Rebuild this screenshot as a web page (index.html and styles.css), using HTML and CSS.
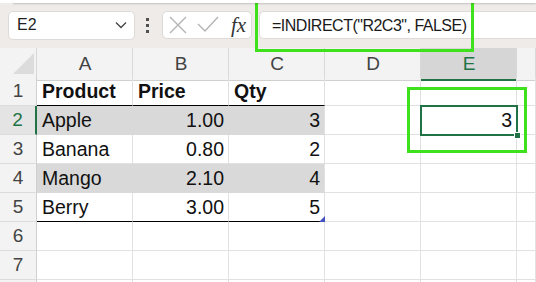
FILE: index.html
```html
<!DOCTYPE html>
<html lang="en">
<head>
    <meta charset="UTF-8">
    <title>Sheet</title>
    <link rel="stylesheet" href="styles.css">
</head>
<body>
    <div class="ribbon-edge"></div>
    <div class="toolbar">
        <div class="namebox">
            <span>E2</span>
            <svg class="chevron" width="12" height="8" viewBox="0 0 12 8"><path d="M1 1.5 L6 6.5 L11 1.5" fill="none" stroke="#444" stroke-width="1.3"/></svg>
        </div>
        <div class="dots"><i></i><i></i><i></i></div>
        <div class="fxbox">
            <svg width="18" height="18" viewBox="0 0 18 18"><path d="M1 1 L17 17 M17 1 L1 17" stroke="#b4b4b4" stroke-width="1.4"/></svg>
            <svg width="22" height="18" viewBox="0 0 22 18"><path d="M1 8 L8 15 L21 1" fill="none" stroke="#b4b4b4" stroke-width="1.4"/></svg>
            <span class="fx">fx</span>
        </div>
        <div class="formula">=INDIRECT("R2C3", FALSE)</div>
    </div>

    <div class="sheet">
        <div class="row head">
            <div class="cell corner"><span class="tri"></span></div>
            <div class="cell colh">A</div>
            <div class="cell colh">B</div>
            <div class="cell colh">C</div>
            <div class="cell colh">D</div>
            <div class="cell colh active">E</div>
            <div class="cell colh"></div>
        </div>
        <div class="row">
            <div class="cell rowh">1</div>
            <div class="cell bold top-line">Product</div>
            <div class="cell bold top-line">Price</div>
            <div class="cell bold top-line">Qty</div>
            <div class="cell"></div>
            <div class="cell"></div>
            <div class="cell"></div>
        </div>
        <div class="row">
            <div class="cell rowh active">2</div>
            <div class="cell fill">Apple</div>
            <div class="cell fill num">1.00</div>
            <div class="cell fill num">3</div>
            <div class="cell"></div>
            <div class="cell num">3</div>
            <div class="cell"></div>
        </div>
        <div class="row">
            <div class="cell rowh">3</div>
            <div class="cell">Banana</div>
            <div class="cell num">0.80</div>
            <div class="cell num">2</div>
            <div class="cell"></div>
            <div class="cell"></div>
            <div class="cell"></div>
        </div>
        <div class="row">
            <div class="cell rowh">4</div>
            <div class="cell fill">Mango</div>
            <div class="cell fill num">2.10</div>
            <div class="cell fill num">4</div>
            <div class="cell"></div>
            <div class="cell"></div>
            <div class="cell"></div>
        </div>
        <div class="row">
            <div class="cell rowh">5</div>
            <div class="cell bottom-line">Berry</div>
            <div class="cell bottom-line num">3.00</div>
            <div class="cell bottom-line num">5<span class="resize"></span></div>
            <div class="cell"></div>
            <div class="cell"></div>
            <div class="cell"></div>
        </div>
        <div class="row">
            <div class="cell rowh">6</div>
            <div class="cell"></div><div class="cell"></div><div class="cell"></div>
            <div class="cell"></div><div class="cell"></div><div class="cell"></div>
        </div>
        <div class="row">
            <div class="cell rowh">7</div>
            <div class="cell"></div><div class="cell"></div><div class="cell"></div>
            <div class="cell"></div><div class="cell"></div><div class="cell"></div>
        </div>
        <div class="row">
            <div class="cell rowh"></div>
            <div class="cell"></div><div class="cell"></div><div class="cell"></div>
            <div class="cell"></div><div class="cell"></div><div class="cell"></div>
        </div>

        <!-- selected cell E2 -->
        <div class="selection"><span class="handle"></span></div>
        <div class="mark mark-cell"></div>
    </div>

    <div class="mark mark-formula"></div>
</body>
</html>
```

FILE: styles.css
```css
* {
    box-sizing: border-box;
}
body {
    margin: 0;
    width: 536px;
    height: 282px;
    overflow: hidden;
    background: #ffffff;
    font-family: "Liberation Sans", Arial, sans-serif;
    position: relative;
}
.ribbon-edge {
    height: 3px;
    margin-left: 13px;
    background: #ffffff;
    box-shadow: 0 1px 2px rgba(0, 0, 0, 0.18);
    position: relative;
    z-index: 1;
}
.toolbar {
    height: 45px;
    background: #efebe8;
    display: flex;
    align-items: center;
    padding-left: 8px;
    padding-bottom: 1px;
}
.namebox {
    width: 127px;
    height: 29px;
    background: #ffffff;
    border: 1px solid #dedad7;
    border-radius: 5px;
    display: flex;
    align-items: center;
    justify-content: space-between;
    padding: 0 7px 0 8px;
    font-size: 16px;
    color: #1f1f1f;
}
.dots {
    width: 4px;
    margin: 0 12px 0 11px;
    display: flex;
    flex-direction: column;
    gap: 3px;
}
.dots i {
    width: 3px;
    height: 3px;
    background: #505050;
}
.fxbox {
    width: 90px;
    height: 28px;
    background: #ffffff;
    border: 1px solid #dedad7;
    border-radius: 5px;
    display: flex;
    align-items: center;
    padding-left: 6px;
    gap: 10px;
}
.fx {
    font-family: "Liberation Serif", "Times New Roman", serif;
    font-style: italic;
    font-size: 21px;
    color: #333333;
    margin-left: 2px;
}
.formula {
    flex: 1;
    margin-left: 7px;
    height: 28px;
    background: #ffffff;
    border: 1px solid #dedad7;
    border-right: none;
    border-radius: 5px 0 0 5px;
    padding-left: 12px;
    font-size: 16px;
    letter-spacing: -0.5px;
    line-height: 27px;
    color: #1a1a1a;
}

/* grid */
.sheet {
    position: relative;
}
.row {
    display: grid;
    grid-template-columns: 37px repeat(5, 96px) 1fr;
    height: 29px;
}
.cell {
    border-right: 1px solid #e1e1e1;
    border-bottom: 1px solid #e1e1e1;
    font-size: 19.5px;
    line-height: 28px;
    padding: 0 4px 0 5px;
    color: #111111;
    white-space: nowrap;
    position: relative;
}
.head .cell {
    background: #f3f3f3;
    border-right-color: #d8d8d8;
    border-bottom-color: #d0d0d0;
}
.colh {
    text-align: center;
    font-size: 19px;
    color: #444444;
    line-height: 31px;
}
.colh.active {
    background: #d6d6d6 !important;
    color: #217346;
    border-bottom: 2px solid #217346 !important;
}
.corner .tri {
    position: absolute;
    left: 13px;
    top: 5px;
    width: 0;
    height: 0;
    border-left: 21px solid transparent;
    border-bottom: 21px solid #dcdcdc;
}
.rowh {
    background: #f3f3f3;
    border-right-color: #d0d0d0;
    border-bottom-color: #dcdcdc;
    text-align: center;
    color: #444444;
    padding: 0;
    font-size: 19px;
}
.rowh.active {
    background: #e4e4e4;
    color: #217346;
    border-right: 2px solid #217346;
}
.bold {
    font-weight: bold;
}
.num {
    text-align: right;
}
.fill {
    background: #d9d9d9;
    border-right-color: #d9d9d9;
    border-bottom-color: #d9d9d9;
}
.fill:nth-child(4) {
    border-right-color: #e1e1e1;
}
.top-line {
    border-bottom: 1px solid #000000;
}
.bottom-line {
    border-bottom: 1px solid #000000;
}
.resize {
    position: absolute;
    right: -1px;
    bottom: -1px;
    width: 0;
    height: 0;
    border-left: 6px solid transparent;
    border-bottom: 6px solid #4452c0;
}
.selection {
    position: absolute;
    left: 420px;
    top: 57px;
    width: 98px;
    height: 31px;
    border: 2px solid #217346;
}
.handle {
    position: absolute;
    right: -5px;
    bottom: -5px;
    width: 7px;
    height: 7px;
    background: #217346;
    border: 1px solid #ffffff;
}
.mark {
    position: absolute;
    border: 3px solid #3ee11c;
}
.mark-formula {
    left: 255px;
    top: -2px;
    width: 219px;
    height: 54px;
}
.mark-cell {
    left: 407px;
    top: 39px;
    width: 120px;
    height: 66px;
}
```
